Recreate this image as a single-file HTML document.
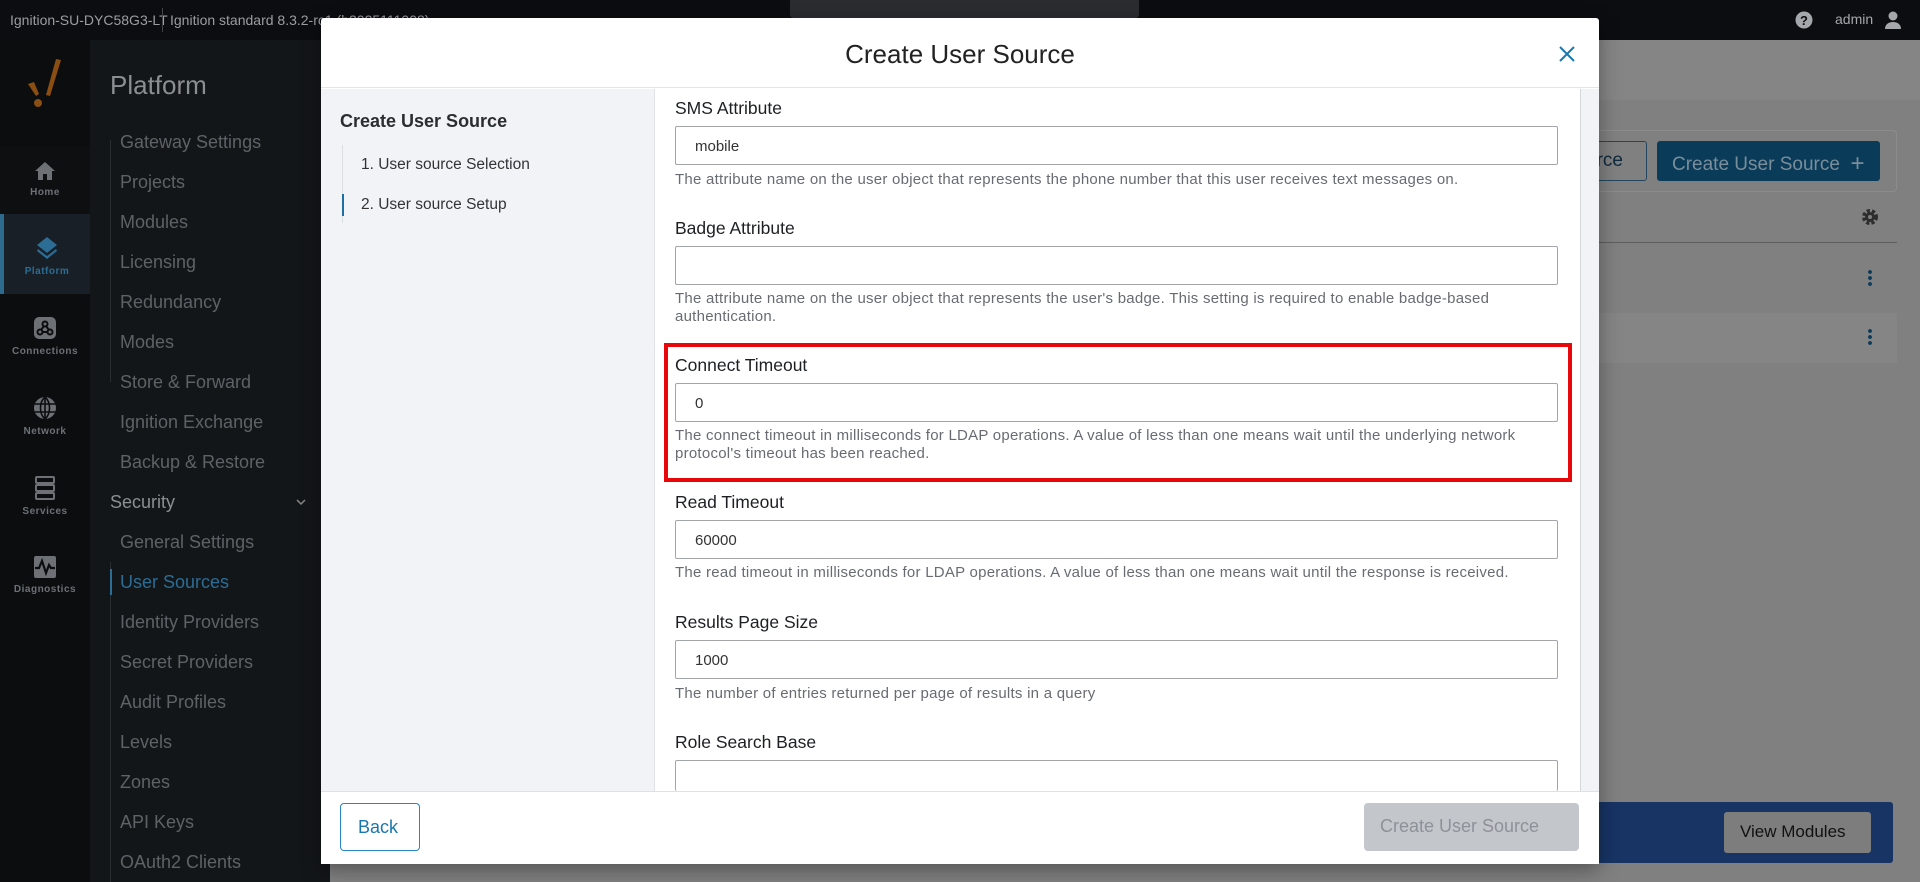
<!DOCTYPE html>
<html><head><meta charset="utf-8"><style>
*{box-sizing:border-box;margin:0;padding:0}
body{width:1920px;height:882px;overflow:hidden;background:#808080;font-family:"Liberation Sans",sans-serif;position:relative}
.a{position:absolute}
.top{left:0;top:0;width:1920px;height:40px;background:#0c0d10;color:#9a9da2;font-size:14px}
.rail{left:0;top:40px;width:90px;height:842px;background:#0b0d0f}
.side{left:90px;top:40px;width:240px;height:842px;background:#131619}
.nav{left:0;width:90px;height:80px;text-align:center;color:#6d7075;font-size:10px;font-weight:bold;letter-spacing:.5px}
.nav svg{display:block;margin:22px auto 6px}
.mi{left:120px;font-size:18px;color:#5e6266}
.modal{left:321px;top:18px;width:1278px;height:846px;background:#fff;border-radius:3px;box-shadow:0 6px 20px rgba(0,0,0,.35)}
.lbl{left:354px;font-size:17.5px;color:#1d1f22}
.inp{left:354px;width:883px;height:39px;border:1px solid #a2a5aa;border-radius:2px;font-size:15px;color:#333;padding:11px 0 0 19px;background:#fff}
.help{left:354px;font-size:15px;letter-spacing:.25px;color:#686c72;line-height:18px;width:880px}
</style></head><body>
<div class="a top">
 <div class="a" style="left:10px;top:12px">Ignition-SU-DYC58G3-LT</div>
 <div class="a" style="left:162px;top:8px;width:1px;height:24px;background:#444"></div>
 <div class="a" style="left:170px;top:12px">Ignition standard 8.3.2-rc1 (b2025111008)</div>
 <div class="a" style="left:790px;top:0;width:349px;height:18px;background:#2a2c30;border-radius:0 0 3px 3px"></div>
 <svg class="a" style="left:1795px;top:11px" width="18" height="18" viewBox="0 0 18 18"><circle cx="9" cy="9" r="8.5" fill="#a4a7ab"/><text x="9" y="14" text-anchor="middle" font-size="13" font-weight="bold" fill="#0c0d10" font-family="Liberation Sans">?</text></svg>
 <div class="a" style="left:1835px;top:11px;color:#a4a7ab">admin</div>
 <svg class="a" style="left:1884px;top:10px" width="18" height="20" viewBox="0 0 18 20"><circle cx="9" cy="6" r="4.5" fill="#a4a7ab"/><path d="M1 19c0-5 4-7 8-7s8 2 8 7z" fill="#a4a7ab"/></svg>
</div>
<div class="a rail">
 <svg class="a" style="left:25px;top:18px" width="40" height="60" viewBox="0 0 40 60"><path d="M36 2 L25 38 L21 37 L31 1z" fill="#8a4d12"/><path d="M3 26 L9 24 L14 36 L11 38z" fill="#8a4d12"/><circle cx="13" cy="45" r="4" fill="#8a4d12"/></svg>
 <div class="a nav" style="top:107px;background:#0e0f11"><svg width="22" height="20" viewBox="0 0 22 20" style="margin-top:14px"><path d="M11 1 L21 10 H18 V19 H13 V13 H9 V19 H4 V10 H1z" fill="#6d7075"/></svg>Home</div>
 <div class="a nav" style="top:174px;background:#191f26;border-left:4px solid #2c6a8e;color:#2b6d95"><svg width="24" height="24" viewBox="0 0 24 24"><path d="M12 1 L22 9 L12 17 L2 9z" fill="#2b6d95"/><path d="M3 13 L12 20 L21 13 L22 15 L12 23 L2 15z" fill="#2b6d95"/></svg>Platform</div>
 <div class="a nav" style="top:254px"><svg width="24" height="24" viewBox="0 0 24 24"><rect x="1" y="1" width="22" height="22" rx="5" fill="#6d7075"/><circle cx="12" cy="8" r="2.5" fill="none" stroke="#0b0d0f" stroke-width="2"/><circle cx="7" cy="16" r="2.5" fill="none" stroke="#0b0d0f" stroke-width="2"/><circle cx="17" cy="16" r="2.5" fill="none" stroke="#0b0d0f" stroke-width="2"/><path d="M11 10 L8 14 M13 10 L16 14 M9.5 16 H14.5" stroke="#0b0d0f" stroke-width="2"/></svg>Connections</div>
 <div class="a nav" style="top:334px"><svg width="24" height="24" viewBox="0 0 24 24"><circle cx="12" cy="12" r="11" fill="#6d7075"/><path d="M1 8H23M1 16H23M12 1V23M12 1C6 6 6 18 12 23M12 1C18 6 18 18 12 23" stroke="#0b0d0f" stroke-width="1.6" fill="none"/></svg>Network</div>
 <div class="a nav" style="top:414px"><svg width="20" height="24" viewBox="0 0 20 24"><rect x="1" y="1" width="18" height="6" rx="1" fill="none" stroke="#6d7075" stroke-width="2"/><rect x="1" y="9" width="18" height="6" rx="1" fill="none" stroke="#6d7075" stroke-width="2"/><rect x="1" y="17" width="18" height="6" rx="1" fill="none" stroke="#6d7075" stroke-width="2"/></svg>Services</div>
 <div class="a nav" style="top:494px"><svg width="22" height="22" viewBox="0 0 22 22"><rect x="0" y="0" width="22" height="22" rx="2" fill="#6d7075"/><path d="M1 12 H5 L8 5 L12 17 L15 9 L17 12 H21" stroke="#0b0d0f" stroke-width="2.2" fill="none"/></svg>Diagnostics</div>
</div>
<div class="a side">
 <div class="a" style="left:20px;top:30px;font-size:26px;color:#8b8e92">Platform</div>
 <div class="a" style="left:20px;top:100px;width:1px;height:242px;background:#2a2e33"></div>
 <div class="a" style="left:20px;top:522px;width:1px;height:320px;background:#2a2e33"></div>
</div>
<div class="a mi" style="top:132px">Gateway Settings</div>
<div class="a mi" style="top:172px">Projects</div>
<div class="a mi" style="top:212px">Modules</div>
<div class="a mi" style="top:252px">Licensing</div>
<div class="a mi" style="top:292px">Redundancy</div>
<div class="a mi" style="top:332px">Modes</div>
<div class="a mi" style="top:372px">Store &amp; Forward</div>
<div class="a mi" style="top:412px">Ignition Exchange</div>
<div class="a mi" style="top:452px">Backup &amp; Restore</div>
<div class="a mi" style="top:492px;left:110px;color:#8b8e92">Security</div>
<svg class="a" style="left:296px;top:499px" width="10" height="7" viewBox="0 0 10 7"><path d="M1 1L5 5L9 1" stroke="#888" stroke-width="1.5" fill="none"/></svg>
<div class="a mi" style="top:532px">General Settings</div>
<div class="a" style="left:110px;top:569px;width:2px;height:26px;background:#2b6d95"></div>
<div class="a mi" style="top:572px;color:#2b6d95">User Sources</div>
<div class="a mi" style="top:612px">Identity Providers</div>
<div class="a mi" style="top:652px">Secret Providers</div>
<div class="a mi" style="top:692px">Audit Profiles</div>
<div class="a mi" style="top:732px">Levels</div>
<div class="a mi" style="top:772px">Zones</div>
<div class="a mi" style="top:812px">API Keys</div>
<div class="a mi" style="top:852px">OAuth2 Clients</div>

<div class="a" style="left:330px;top:40px;width:1590px;height:60px;background:#858585"></div>
<div class="a" style="left:1567px;top:130px;width:330px;height:62px;border:1px solid #8c8c8c;border-radius:4px"></div>
<div class="a" style="left:1560px;top:141px;width:87px;height:40px;border:1px solid #23465e;border-radius:3px;color:#0d2a3e;font-size:19px;padding:8px 0 0 25px">urce</div>
<div class="a" style="left:1657px;top:141px;width:223px;height:40px;background:#0a3b59;border-radius:3px;color:#7a8d9a;font-size:19px;padding:8px 0 0 15px">Create User Source &nbsp;<span style="font-size:24px;position:relative;top:1px">+</span></div>
<svg class="a" style="left:1861px;top:208px" width="18" height="18" viewBox="0 0 18 18"><circle cx="9" cy="9" r="6" fill="none" stroke="#2e2e2e" stroke-width="4" stroke-dasharray="3 2"/><circle cx="9" cy="9" r="5" fill="#2e2e2e"/><circle cx="9" cy="9" r="2" fill="#808080"/></svg>
<div class="a" style="left:1590px;top:242px;width:307px;height:1px;background:#5e5e5e"></div>
<div class="a" style="left:1590px;top:313px;width:307px;height:50px;background:#858585"></div>
<div class="a" style="left:1868px;top:269px;width:4px;height:18px;background:radial-gradient(circle,#0c3a58 1.8px,transparent 2px) 0 0/4px 6px"></div>
<div class="a" style="left:1868px;top:328px;width:4px;height:18px;background:radial-gradient(circle,#0c3a58 1.8px,transparent 2px) 0 0/4px 6px"></div>
<div class="a" style="left:1560px;top:802px;width:333px;height:61px;background:#173464;border-radius:3px"></div>
<div class="a" style="left:1724px;top:812px;width:147px;height:41px;background:#7d7d7d;border-radius:3px;color:#111;font-size:17px;padding:10px 0 0 16px">View Modules</div>

<div class="a modal">
 <div class="a" style="left:0;top:0;width:1278px;height:70px;border-bottom:1px solid #e3e5e8"></div>
 <div class="a" style="left:0;top:21px;width:1278px;text-align:center;font-size:26px;color:#222">Create User Source</div>
 <svg class="a" style="left:1238px;top:28px" width="16" height="16" viewBox="0 0 16 16"><path d="M1 1L15 15M15 1L1 15" stroke="#1a77b0" stroke-width="2"/></svg>
 <div class="a" style="left:0;top:71px;width:334px;height:702px;background:#f2f3f6;border-right:1px solid #dfe1e4"></div>
 <div class="a" style="left:19px;top:93px;font-size:18px;font-weight:bold;color:#2a2d31">Create User Source</div>
 <div class="a" style="left:21px;top:127px;width:1px;height:78px;background:#dcdee2"></div>
 <div class="a" style="left:21px;top:176px;width:2px;height:22px;background:#1a6fa3"></div>
 <div class="a" style="left:40px;top:138px;font-size:15.5px;color:#333">1. User source Selection</div>
 <div class="a" style="left:40px;top:178px;font-size:15.5px;color:#333">2. User source Setup</div>
 <div class="a" style="left:1259px;top:71px;width:19px;height:702px;background:#f2f3f6;border-left:1px solid #d5d7da"></div>

 <div class="a lbl" style="top:80px">SMS Attribute</div>
 <div class="a inp" style="top:108px">mobile</div>
 <div class="a help" style="top:153px">The attribute name on the user object that represents the phone number that this user receives text messages on.</div>
 <div class="a lbl" style="top:200px">Badge Attribute</div>
 <div class="a inp" style="top:228px"></div>
 <div class="a help" style="top:272px">The attribute name on the user object that represents the user's badge. This setting is required to enable badge-based authentication.</div>
 <div class="a" style="left:343px;top:325px;width:908px;height:139px;border:4px solid #e8070b"></div>
 <div class="a lbl" style="top:337px">Connect Timeout</div>
 <div class="a inp" style="top:365px">0</div>
 <div class="a help" style="top:409px">The connect timeout in milliseconds for LDAP operations. A value of less than one means wait until the underlying network protocol's timeout has been reached.</div>
 <div class="a lbl" style="top:474px">Read Timeout</div>
 <div class="a inp" style="top:502px">60000</div>
 <div class="a help" style="top:546px">The read timeout in milliseconds for LDAP operations. A value of less than one means wait until the response is received.</div>
 <div class="a lbl" style="top:594px">Results Page Size</div>
 <div class="a inp" style="top:622px">1000</div>
 <div class="a help" style="top:667px">The number of entries returned per page of results in a query</div>
 <div class="a lbl" style="top:714px">Role Search Base</div>
 <div class="a inp" style="top:742px;height:31px;border-bottom:none"></div>

 <div class="a" style="left:0;top:773px;width:1278px;height:73px;background:#fff;border-top:1px solid #dfe1e4"></div>
 <div class="a" style="left:19px;top:785px;width:80px;height:48px;border:1px solid #2a86bf;border-radius:4px;color:#1a77b0;font-size:18px;padding:13px 0 0 17px">Back</div>
 <div class="a" style="left:1043px;top:785px;width:215px;height:48px;background:#c3c6cb;border-radius:4px;color:#8d9298;font-size:18px;padding:13px 0 0 16px">Create User Source</div>
</div>
</body></html>
